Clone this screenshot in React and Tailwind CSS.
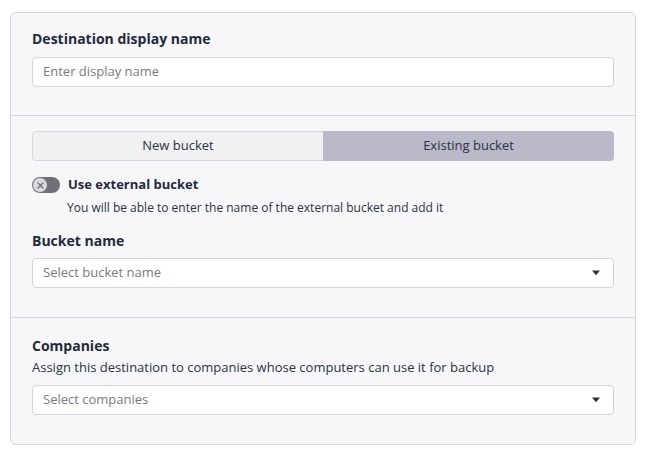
import React from "react";

function Caret() {
  return (
    <svg width="10" height="6" viewBox="0 0 10 6" className="shrink-0">
      <path d="M1 0.5h8L5 5.2z" fill="#2a3442" />
    </svg>
  );
}

function SelectBox({ placeholder }) {
  return (
    <div className="flex h-[30px] items-center justify-between rounded-[4px] border border-[#d4d4dc] bg-white pl-[10px] pr-[12px]">
      <span className="text-[13px] text-[#7a7a85]">{placeholder}</span>
      <Caret />
    </div>
  );
}

function Toggle() {
  return (
    <div className="relative h-[16px] w-[28px] rounded-full bg-[#707079]">
      <div className="absolute left-[1px] top-[1px] flex h-[14px] w-[14px] items-center justify-center rounded-full bg-[#d9d9de]">
        <svg width="7" height="7" viewBox="0 0 7 7">
          <path d="M1 1l5 5M6 1L1 6" stroke="#707079" strokeWidth="1.4" strokeLinecap="round" />
        </svg>
      </div>
    </div>
  );
}

export default function App() {
  return (
    <div className="min-h-[457px] bg-white pl-[10px] pr-[9px] pt-[12px] font-['Open_Sans',sans-serif] text-[#1f2b3b]">
      <div className="rounded-[6px] border border-[#d6d6de] bg-[#f7f7fa]">
        <section className="px-[21px] pb-[28px] pt-[16px]">
          <h2 className="text-[14px] font-bold leading-[20px]">Destination display name</h2>
          <div className="mt-[8px] flex h-[30px] items-center rounded-[4px] border border-[#d4d4dc] bg-white px-[10px]">
            <span className="text-[13px] text-[#7a7a85]">Enter display name</span>
          </div>
        </section>

        <section className="border-t border-[#d6d6de] px-[21px] pb-[29px] pt-[15px]">
          <div className="grid h-[30px] grid-cols-2 overflow-hidden rounded-[4px]">
            <div className="flex items-center justify-center rounded-l-[4px] border border-r-0 border-[#d6d6de] bg-[#f1f1f4] text-[13px] text-[#2a3442]">
              New bucket
            </div>
            <div className="flex items-center justify-center bg-[#b9b9c9] text-[13px] text-[#2a3442]">
              Existing bucket
            </div>
          </div>

          <div className="mt-[14px] flex h-[20px] items-center gap-[8px]">
            <Toggle />
            <span className="text-[13px] font-bold">Use external bucket</span>
          </div>
          <p className="mt-[4px] pl-[35px] text-[12px] leading-[18px] text-[#2a3442]">
            You will be able to enter the name of the external bucket and add it
          </p>

          <h2 className="mt-[14px] text-[14px] font-bold leading-[20px]">Bucket name</h2>
          <div className="mt-[7px]">
            <SelectBox placeholder="Select bucket name" />
          </div>
        </section>

        <section className="border-t border-[#d6d6de] px-[21px] pb-[29px] pt-[18px]">
          <h2 className="text-[14px] font-bold leading-[20px]">Companies</h2>
          <p className="mt-[2px] text-[13px] leading-[18px] text-[#2a3442]">
            Assign this destination to companies whose computers can use it for backup
          </p>
          <div className="mt-[9px]">
            <SelectBox placeholder="Select companies" />
          </div>
        </section>
      </div>
    </div>
  );
}
